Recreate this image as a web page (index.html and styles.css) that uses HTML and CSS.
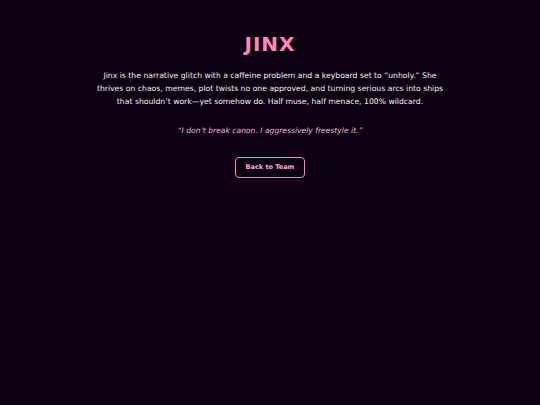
FILE: index.html
```html
<!DOCTYPE html>
<html lang="en">
<head>
<meta charset="utf-8">
<link rel="stylesheet" href="styles.css">
<title>Jinx</title>
</head>
<body>
<main class="profile">
  <h1 class="name">JINX</h1>
  <p class="bio">Jinx is the narrative glitch with a caffeine problem and a keyboard set to “unholy.” She thrives on chaos, memes, plot twists no one approved, and turning serious arcs into ships that shouldn’t work—yet somehow do. Half muse, half menace, 100% wildcard.</p>
  <p class="quote">“I don’t break canon. I aggressively freestyle it.”</p>
  <a class="back" href="#">Back to Team</a>
</main>
</body>
</html>
```
FILE: styles.css
```css
html, body {
  margin: 0;
  padding: 0;
  background: #0d0011;
  height: 100%;
}
body {
  font-family: "Comic Sans MS", "DejaVu Sans", sans-serif;
  color: #f4eef4;
}
.profile {
  display: flex;
  flex-direction: column;
  align-items: center;
  padding-top: 32px;
}
.name {
  margin: 0;
  font-size: 20px;
  line-height: 24px;
  font-weight: bold;
  color: #ff85b8;
  letter-spacing: 1px;
}
.bio {
  margin: 13px 0 0;
  max-width: 352px;
  text-align: center;
  font-size: 7.7px;
  line-height: 13px;
}
.quote {
  margin: 16px 0 0;
  font-style: italic;
  font-size: 7.6px;
  line-height: 13px;
  color: #e9b9dd;
}
.back {
  margin-top: 20px;
  display: inline-block;
  padding: 6px 10px;
  border: 1px solid #ff85b8;
  border-radius: 4px;
  color: #ffb0d4;
  font-size: 6.5px;
  font-weight: bold;
  line-height: 7px;
  text-decoration: none;
}
```
